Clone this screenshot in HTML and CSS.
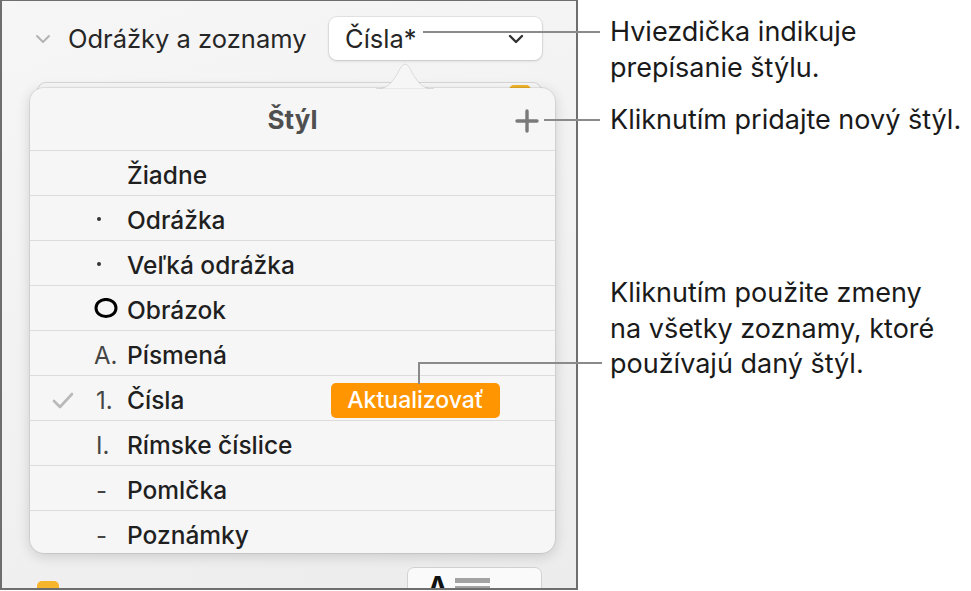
FILE: index.html
```html
<!DOCTYPE html>
<html lang="sk">
  <head>
    <meta charset="utf-8" />
    <title>Odrážky a zoznamy</title>
    <link rel="stylesheet" href="styles.css">
  </head>
  <body>
    <div class="page">
      <div class="panel">
        <div class="section-head">
          <svg class="disclosure" width="16" height="10" viewBox="0 0 16 10"><polyline points="2,2 8,8 14,2" /></svg>
          <span class="section-title">Odrážky a zoznamy</span>
          <div class="select">
            <span class="select-label">Čísla*</span>
            <svg class="select-chevron" width="16" height="10" viewBox="0 0 16 10"><polyline points="2,2 8,8 14,2" /></svg>
          </div>
        </div>

        <div class="under-field"><span class="under-dot"></span></div>

        <div class="bottom-row">
          <span class="yellow-box"></span>
          <span class="faint">Zarovnanie</span>
          <div class="align-btn">
            <b>A</b>
            <span class="bars"><i></i><i></i><i></i></span>
          </div>
        </div>

        <div class="popover">
          <svg class="popover-arrow" width="58" height="28" viewBox="0 0 58 28">
            <path d="M0,28 C10,28 14,24 20,15 L25,6 Q29,0 33,6 L38,15 C44,24 48,28 58,28 Z" />
          </svg>
          <div class="pop-head">
            <span>Štýl</span>
            <svg class="plus" width="24" height="24" viewBox="0 0 24 24"><path d="M12 2 V22 M2 12 H22" /></svg>
          </div>
          <ul class="styles">
            <li><span class="tick"></span><span class="marker"></span><span class="name">Žiadne</span></li>
            <li><span class="tick"></span><span class="marker"><i class="dot"></i></span><span class="name">Odrážka</span></li>
            <li><span class="tick"></span><span class="marker"><i class="dot"></i></span><span class="name">Veľká odrážka</span></li>
            <li><span class="tick"></span><span class="marker"><svg class="ring" width="26" height="21" viewBox="0 0 26 21"><ellipse cx="12" cy="10" rx="10" ry="8.6" /></svg></span><span class="name">Obrázok</span></li>
            <li><span class="tick"></span><span class="marker">A.</span><span class="name">Písmená</span></li>
            <li>
              <span class="tick"><svg width="22" height="17" viewBox="0 0 22 17"><polyline points="2,9 8,15 20,2" /></svg></span>
              <span class="marker num">1.</span><span class="name">Čísla</span>
              <span class="badge">Aktualizovať</span>
            </li>
            <li><span class="tick"></span><span class="marker num">I.</span><span class="name">Rímske číslice</span></li>
            <li><span class="tick"></span><span class="marker num">-</span><span class="name">Pomlčka</span></li>
            <li><span class="tick"></span><span class="marker num">-</span><span class="name">Poznámky</span></li>
          </ul>
        </div>
      </div>

      <div class="notes">
        <p class="note note-star">Hviezdička indikuje<br>prepísanie štýlu.</p>
        <p class="note note-add">Kliknutím pridajte nový štýl.</p>
        <p class="note note-update">Kliknutím použite zmeny<br>na všetky zoznamy, ktoré<br>používajú daný štýl.</p>
      </div>

      <!-- callout lines -->
      <span class="leader leader-star"></span>
      <span class="leader leader-add"></span>
      <span class="leader-update"></span>
    </div>
  </body>
</html>
```

FILE: styles.css
```css
body {
  margin: 0;
  background-color: #ffffff;
  font-family: Inter, "Noto Sans", sans-serif;
  color: #1d1d1d;
}

.page {
  position: relative;
  display: flex;
  width: 971px;
  height: 591px;
}

/* inspector panel */
.panel {
  position: relative;
  display: flex;
  flex-direction: column;
  width: 578px;
  height: 590px;
  box-sizing: border-box;
  border: 2px solid #6e6e6e;
  border-top-width: 1px;
  background: linear-gradient(160deg, #f6f6f6 0%, #f1f1f1 60%, #ececec 100%);
  overflow: hidden;
}

.section-head {
  display: flex;
  align-items: center;
  height: 43px;
  margin-top: 16px;
  padding-left: 33px;
}

.disclosure {
  fill: none;
  stroke: #b3b3b3;
  stroke-width: 2;
  stroke-linecap: round;
  stroke-linejoin: round;
}

.section-title {
  margin-left: 17px;
  font-size: 25.5px;
  color: #262626;
}

.select {
  display: flex;
  align-items: center;
  justify-content: space-between;
  width: 213px;
  height: 43px;
  box-sizing: border-box;
  margin-left: auto;
  margin-right: 34px;
  padding: 0 18px 0 16px;
  background: #ffffff;
  border-radius: 8px;
  box-shadow: 0 0 0 1px rgba(0, 0, 0, 0.06), 0 1px 3px rgba(0, 0, 0, 0.15);
}

.select-label {
  font-size: 25.5px;
  color: #262626;
}

.select-chevron {
  fill: none;
  stroke: #333333;
  stroke-width: 2.4;
  stroke-linecap: round;
  stroke-linejoin: round;
}

.under-field {
  position: relative;
  width: 503px;
  height: 40px;
  margin: 22px 0 0 35px;
  background: #f8f8f8;
  border: 1px solid #d6d6d6;
  border-radius: 9px;
}

.under-dot {
  position: absolute;
  top: 2px;
  right: 10px;
  width: 22px;
  height: 22px;
  border-radius: 5px;
  background: #f2b52b;
}

.bottom-row {
  display: flex;
  align-items: flex-start;
  height: 21px;
  margin-top: auto;
  padding-left: 35px;
}

.yellow-box {
  width: 22px;
  height: 22px;
  margin-top: 14px;
  border-radius: 5px;
  background: #f7b52c;
}

.faint {
  margin: 16px 0 0 14px;
  font-size: 24px;
  color: #c4c4c4;
}

.align-btn {
  display: flex;
  align-items: flex-start;
  width: 135px;
  height: 34px;
  box-sizing: border-box;
  margin-left: auto;
  margin-right: 34px;
  padding: 8px 0 0 20px;
  background: #fafafa;
  border: 1px solid #d2d2d2;
  border-radius: 7px;
}

.align-btn b {
  font-size: 26px;
  line-height: 20px;
  color: #111111;
}

.bars {
  display: flex;
  flex-direction: column;
  gap: 3px;
  margin: 2px 0 0 8px;
}

.bars i {
  display: block;
  width: 35px;
  height: 5px;
  background: #a3a3a3;
}

/* style popover */
.popover {
  position: absolute;
  left: 28px;
  top: 87px;
  width: 525px;
  height: 465px;
  background: #f6f6f6;
  border-radius: 14px;
  box-shadow: 0 0 0 1px rgba(0, 0, 0, 0.07), 0 3px 14px rgba(0, 0, 0, 0.16);
}

.popover-arrow {
  position: absolute;
  left: 346px;
  top: -27px;
}

.popover-arrow path {
  fill: #f6f6f6;
  stroke: rgba(0, 0, 0, 0.1);
  stroke-width: 1;
}

.pop-head {
  position: relative;
  display: flex;
  align-items: center;
  justify-content: center;
  height: 62px;
  font-size: 26px;
  font-weight: 700;
  color: #4f4f4f;
}

.plus {
  position: absolute;
  right: 16px;
  top: 21px;
  fill: none;
  stroke: #7a7a7a;
  stroke-width: 3.4;
  stroke-linecap: round;
}

.styles {
  margin: 0;
  padding: 0;
  list-style: none;
}

.styles li {
  display: flex;
  align-items: center;
  height: 45px;
  box-sizing: border-box;
  padding-top: 4px;
  border-top: 1px solid #dcdcdc;
}

.tick {
  width: 64px;
  box-sizing: border-box;
  padding-left: 22px;
}

.tick svg {
  display: block;
  fill: none;
  stroke: #b9b9b9;
  stroke-width: 2.6;
  stroke-linecap: round;
  stroke-linejoin: round;
}

.marker {
  display: flex;
  align-items: center;
  width: 33px;
  font-size: 24px;
  color: #454545;
}

.marker.num {
  padding-left: 2px;
  box-sizing: border-box;
}

.marker .dot {
  display: block;
  width: 4px;
  height: 4px;
  margin: 0 0 2px 3px;
  border-radius: 50%;
  background: #333333;
}

.ring {
  display: block;
  margin-bottom: 3px;
  fill: none;
  stroke: #000000;
  stroke-width: 3;
}

.name {
  font-size: 24.5px;
  font-weight: 500;
  color: #1f1f1f;
}

.badge {
  margin: 0 55px 0 auto;
  padding: 0 16px;
  height: 35px;
  line-height: 35px;
  border-radius: 5px;
  background: #ff9500;
  color: #ffffff;
  font-size: 23px;
  font-weight: 500;
}

/* annotations */
.notes {
  padding: 14px 0 0 32px;
}

.note {
  margin: 0;
  font-size: 27px;
  line-height: 36px;
  color: #1a1a1a;
}

.note-add {
  margin-top: 16px;
}

.note-update {
  margin-top: 137px;
}

.note-update {
  line-height: 35.5px;
}

.leader {
  position: absolute;
  height: 2px;
  background: #8a8a8a;
}

.leader-star {
  left: 423px;
  top: 31px;
  width: 177px;
}

.leader-add {
  left: 544px;
  top: 119px;
  width: 56px;
}

.leader-update {
  position: absolute;
  left: 418px;
  top: 362px;
  width: 182px;
  height: 20px;
  border-top: 2px solid #8a8a8a;
  border-left: 2px solid #8a8a8a;
}
```
